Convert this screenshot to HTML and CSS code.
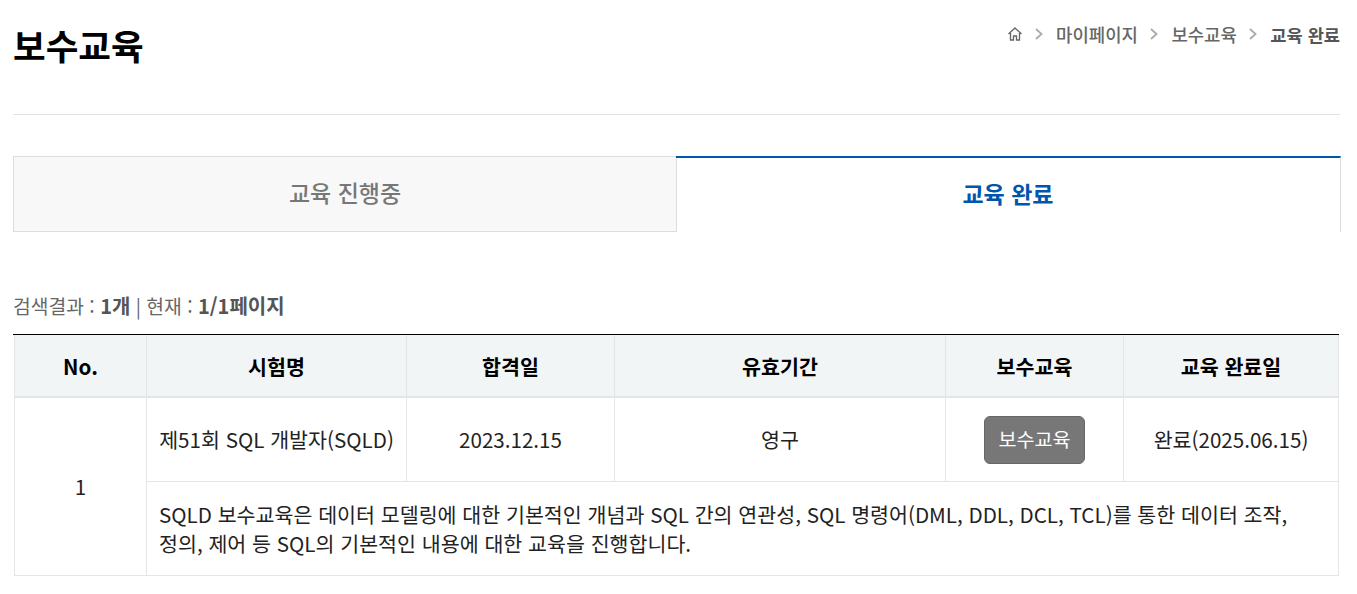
FILE: index.html
```html
<!DOCTYPE html>
<html lang="ko">
<head>
<meta charset="utf-8">
<title>보수교육</title>
<link rel="stylesheet" href="styles.css">
</head>
<body>
<main class="page">
  <header class="head">
    <h1 class="title">보수교육</h1>
    <nav class="crumbs">
      <svg class="home" width="16" height="16" viewBox="0 0 16 16" fill="none" stroke="#666" stroke-width="1.3"><path d="M1.5 8 8 2l6.500 6M3.500 7v7h3V10h3v4h3V7"/></svg>
      <svg class="sep" width="8" height="12" viewBox="0 0 8 12" fill="none" stroke="#aaa" stroke-width="1.800"><path d="m1 1 5.500 5L1 11"/></svg>
      <span>마이페이지</span>
      <svg class="sep" width="8" height="12" viewBox="0 0 8 12" fill="none" stroke="#aaa" stroke-width="1.800"><path d="m1 1 5.500 5L1 11"/></svg>
      <span>보수교육</span>
      <svg class="sep" width="8" height="12" viewBox="0 0 8 12" fill="none" stroke="#aaa" stroke-width="1.800"><path d="m1 1 5.500 5L1 11"/></svg>
      <strong>교육 완료</strong>
    </nav>
  </header>
  <div class="tabs">
    <div class="tab">교육 진행중</div>
    <div class="tab active">교육 완료</div>
  </div>
  <p class="summary">검색결과 : <b>1개</b> | 현재 : <b>1/1페이지</b></p>
  <div class="grid-wrap">
  <table class="grid">
    <colgroup>
      <col class="c1"><col class="c2"><col class="c3"><col class="c4"><col class="c5"><col class="c6">
    </colgroup>
    <thead>
      <tr><th>No.</th><th>시험명</th><th>합격일</th><th>유효기간</th><th>보수교육</th><th>교육 완료일</th></tr>
    </thead>
    <tbody>
      <tr class="main-row">
        <td rowspan="2">1</td>
        <td>제51회 SQL 개발자(SQLD)</td>
        <td>2023.12.15</td>
        <td>영구</td>
        <td><button class="btn" type="button">보수교육</button></td>
        <td>완료(2025.06.15)</td>
      </tr>
      <tr class="desc-row">
        <td colspan="5">SQLD 보수교육은 데이터 모델링에 대한 기본적인 개념과 SQL 간의 연관성, SQL 명령어(DML, DDL, DCL, TCL)를 통한 데이터 조작, 정의, 제어 등 SQL의 기본적인 내용에 대한 교육을 진행합니다.</td>
      </tr>
    </tbody>
  </table>
  </div>
</main>
</body>
</html>
```
FILE: styles.css
```css
* { box-sizing: border-box; }
html, body { margin: 0; background: #fff; }
body {
  font-family: "Noto Sans CJK KR", "Noto Sans", sans-serif;
  color: #222;
  font-size: 18px;
  overflow: hidden;
}
.page { padding: 0 17px 0 13px; }
.head {
  height: 115px;
  display: flex;
  justify-content: space-between;
  align-items: flex-start;
  border-bottom: 1px solid #e2e2e2;
}
.title {
  margin: 19px 0 0;
  font-size: 35.5px;
  line-height: 52px;
  font-weight: 700;
  color: #000;
}
.crumbs {
  margin-top: 21px;
  display: flex;
  align-items: center;
  height: 26px;
  font-size: 17.8px;
  font-weight: 500;
  color: #666;
}
.crumbs .sep { margin: 0 13px 0 12.5px; }
.crumbs strong { font-size: 17.6px; font-weight: 700; color: #555; }
.home { display: block; }
.tabs {
  margin: 41px -1px 0 0;
  display: flex;
  height: 76px;
}
.tab {
  flex: 0 0 664px;
  display: flex;
  align-items: center;
  justify-content: center;
  font-size: 23px;
  font-weight: 500;
  color: #777;
  background: #f8f8f8;
  border: 1px solid #ddd;
  padding-bottom: 5px;
}
.tab.active {
  flex: 1;
  margin-left: -1px;
  background: transparent;
  color: #0056ac;
  font-weight: 700;
  border: 0;
  border-top: 2px solid #0056ac;
  border-right: 1px solid #ddd;
}
.summary {
  margin: 60px 0 0;
  height: 42px;
  line-height: 28px;
  font-size: 19.3px;
  color: #666;
}
.summary b { font-size: 20px; font-weight: 700; color: #555; }
.grid-wrap {
  width: 1326px;
  border-top: 1px solid #000;
  padding: 0 1px;
}
.grid {
  width: 1324px;
  border-collapse: collapse;
  table-layout: fixed;
}
.c1 { width: 132px; }
.c2 { width: 260px; }
.c3 { width: 208px; }
.c4 { width: 331px; }
.c5 { width: 178px; }
.c6 { width: 215px; }
.grid th, .grid td { border: 1px solid #e2e6ea; text-align: center; }
.grid th {
  height: 62px;
  background: #f2f5f6;
  font-size: 20.6px;
  font-weight: 700;
  color: #000;
  border-top: 0;
  border-bottom-width: 2px;
}
.grid td { font-size: 20.6px; color: #222; padding: 0 12px; word-break: keep-all; }
.main-row td { height: 84px; }
.desc-row td {
  text-align: left;
  height: 94px;
  line-height: 29px;
  padding-top: 1px;
}
.btn {
  display: block;
  margin: 1px auto 0;
  width: 101px;
  height: 48px;
  font: 400 19.6px "Noto Sans CJK KR", sans-serif;
  color: #fff;
  background: #777;
  border: 1px solid #666;
  border-radius: 6px;
  padding: 0 0 3px;
}
```
